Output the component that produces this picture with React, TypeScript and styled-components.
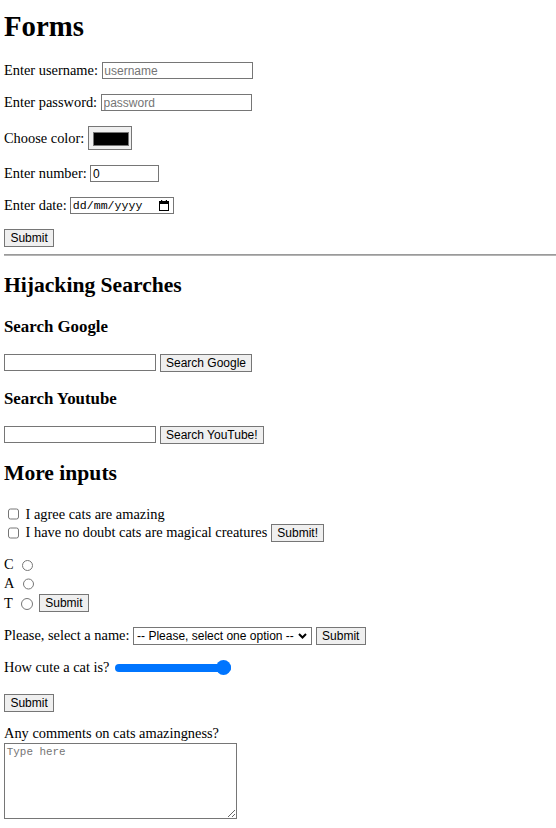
import styled, { createGlobalStyle } from 'styled-components'

const GlobalStyle = createGlobalStyle`
  html, body {
    margin: 0;
    background: #fff;
  }
  body {
    font-family: "Liberation Serif", "Times New Roman", serif;
    font-size: 14.4px;
    color: #000;
  }
`

const Page = styled.main`
  display: flex;
  flex-direction: column;
  padding: 0 0 0 4px;
`

const Form = styled.form`
  display: flex;
  flex-direction: column;
`

const Title = styled.h1<{ $mt: number }>`
  margin: ${p => p.$mt}px 0 0;
  font-size: 28.8px;
  line-height: 33px;
  font-weight: bold;
`

const Section = styled.h2<{ $mt: number }>`
  margin: ${p => p.$mt}px 0 0;
  font-size: 21.6px;
  line-height: 25px;
  font-weight: bold;
`

const Sub = styled.h3<{ $mt: number }>`
  margin: ${p => p.$mt}px 0 0;
  font-size: 16.85px;
  line-height: 19px;
  font-weight: bold;
`

const Row = styled.div<{ $mt: number; $h?: number }>`
  display: flex;
  align-items: center;
  gap: 3.6px;
  height: ${p => p.$h ?? 20}px;
  margin-top: ${p => p.$mt}px;
  white-space: nowrap;
`

const Rule = styled.hr`
  margin: 6px 0 0;
  height: 0;
  border: none;
  border-top: 1px solid #9a9a9a;
  border-bottom: 1px solid #b4b4b4;
`

const TextInput = styled.input<{ $w: number }>`
  box-sizing: border-box;
  width: ${p => p.$w}px;
  height: 17px;
  margin: 0;
  padding: 0 1.8px;
  border: 1px solid #767676;
  border-radius: 0;
  background: #fff;
  color: #000;
  font: 12px "Liberation Sans", Arial, sans-serif;

  &::placeholder {
    color: #757575;
  }
  &::-webkit-inner-spin-button,
  &::-webkit-outer-spin-button {
    -webkit-appearance: none;
    margin: 0;
  }
`

const Button = styled.button`
  box-sizing: border-box;
  height: 18px;
  margin: 0;
  padding: 0 5.4px;
  border: 1px solid #767676;
  border-radius: 0;
  background: #efefef;
  color: #000;
  font: 12px "Liberation Sans", Arial, sans-serif;
  line-height: 14px;
`

const ColorPick = styled.input`
  box-sizing: border-box;
  width: 44.5px;
  height: 24px;
  margin: 0;
  padding: 0;
  border: 1px solid #767676;
  border-radius: 0;
  background: #efefef;

  &::-webkit-color-swatch-wrapper {
    padding: 5px 2px 3px 4px;
  }
  &::-webkit-color-swatch {
    border: 1px solid #777;
  }
`

const DateField = styled.div`
  box-sizing: border-box;
  display: flex;
  align-items: center;
  width: 103.5px;
  height: 17px;
  padding: 0 3.5px 0 1.5px;
  border: 1px solid #767676;
  background: #fff;

  input {
    flex: 1;
    min-width: 0;
    margin: 0;
    padding: 0;
    border: none;
    outline: none;
    background: transparent;
    font: 11.6px "Liberation Mono", "DejaVu Sans Mono", monospace;
    color: #000;
  }
  input::placeholder {
    color: #000;
  }
`

const Check = styled.input`
  width: 11.7px;
  height: 11.7px;
  margin: 2.7px 2.7px 2.7px 3.6px;
`

const Radio = styled.input`
  width: 11.7px;
  height: 11.7px;
  margin: 1px 2.7px 0 4.5px;
`

const SelectWrap = styled.div`
  position: relative;
  display: flex;

  svg {
    position: absolute;
    top: 6px;
    right: 5px;
    pointer-events: none;
  }
`

const Select = styled.select`
  box-sizing: border-box;
  width: 179px;
  height: 18px;
  margin: 0;
  padding: 0 0 0 3px;
  border: 1px solid #767676;
  border-radius: 0;
  background: #fff;
  color: #000;
  font: 12px "Liberation Sans", Arial, sans-serif;
  -webkit-appearance: none;
  appearance: none;
`

const Range = styled.input`
  -webkit-appearance: none;
  appearance: none;
  width: 116px;
  height: 16px;
  margin: 0 0 0 2px;
  background: transparent;

  &::-webkit-slider-runnable-track {
    height: 8px;
    border-radius: 4px;
    background: #0075ff;
  }
  &::-webkit-slider-thumb {
    -webkit-appearance: none;
    width: 15px;
    height: 15px;
    margin-top: -3.5px;
    border: none;
    border-radius: 50%;
    background: #0075ff;
  }
`

const Caption = styled.label<{ $mt: number }>`
  display: block;
  margin-top: ${p => p.$mt}px;
  line-height: 16.5px;
`

const Comments = styled.textarea`
  box-sizing: border-box;
  width: 233px;
  height: 76px;
  margin: 1.5px 0 0;
  padding: 1.8px;
  border: 1px solid #767676;
  border-radius: 0;
  font: 10.9px "Liberation Mono", "DejaVu Sans Mono", monospace;
  resize: both;

  &::placeholder {
    color: #757575;
  }
`

const CalendarIcon = () => (
  <svg width="10" height="11" viewBox="0 0 10 11">
    <rect x="0.5" y="1.5" width="9" height="9" fill="none" stroke="#000" />
    <rect x="0.5" y="1.5" width="9" height="2.5" fill="#000" />
    <rect x="2" y="0" width="1.2" height="2" fill="#000" />
    <rect x="6.8" y="0" width="1.2" height="2" fill="#000" />
  </svg>
)

const Chevron = () => (
  <svg width="9" height="6" viewBox="0 0 9 6">
    <path d="M1 1 L4.5 4.5 L8 1" fill="none" stroke="#000" strokeWidth="2" />
  </svg>
)

const App = () => {
  return (
    <Page>
      <GlobalStyle />
      <Title $mt={10}>Forms</Title>
      <Form onSubmit={e => e.preventDefault()}>
        <Row $mt={17.5}>
          <label htmlFor="username">Enter username:</label>
          <TextInput id="username" $w={151} type="text" placeholder="username" />
        </Row>
        <Row $mt={12}>
          <label htmlFor="password">Enter password:</label>
          <TextInput id="password" $w={151} type="password" placeholder="password" />
        </Row>
        <Row $mt={12.5} $h={26}>
          <label htmlFor="color">Choose color:</label>
          <ColorPick id="color" type="color" defaultValue="#000000" />
        </Row>
        <Row $mt={12.5}>
          <label htmlFor="number">Enter number:</label>
          <TextInput id="number" $w={68.5} type="number" defaultValue={0} />
        </Row>
        <Row $mt={12}>
          <label htmlFor="date">Enter date:</label>
          <DateField>
            <input id="date" type="text" placeholder="dd/mm/yyyy" />
            <CalendarIcon />
          </DateField>
        </Row>
        <Row $mt={12.5}>
          <Button type="submit">Submit</Button>
        </Row>
      </Form>
      <Rule />

      <Section $mt={17.2}>Hijacking Searches</Section>
      <Sub $mt={18.6}>Search Google</Sub>
      <Form action="https://www.google.com/search" onSubmit={e => e.preventDefault()}>
        <Row $mt={18.2} $h={18}>
          <TextInput $w={152} type="text" name="q" />
          <Button type="submit">Search Google</Button>
        </Row>
      </Form>
      <Sub $mt={16.8}>Search Youtube</Sub>
      <Form action="https://www.youtube.com/results" onSubmit={e => e.preventDefault()}>
        <Row $mt={18.2} $h={18}>
          <TextInput $w={152} type="text" name="search_query" />
          <Button type="submit">Search YouTube!</Button>
        </Row>
      </Form>

      <Section $mt={17.2}>More inputs</Section>
      <Form onSubmit={e => e.preventDefault()}>
        <Row $mt={19.8} $h={16.5}>
          <Check id="agree" type="checkbox" />
          <label htmlFor="agree">I agree cats are amazing</label>
        </Row>
        <Row $mt={1.3} $h={18}>
          <Check id="magic" type="checkbox" />
          <label htmlFor="magic">I have no doubt cats are magical creatures</label>
          <Button type="submit">Submit!</Button>
        </Row>
      </Form>
      <Form onSubmit={e => e.preventDefault()}>
        <Row $mt={14.2} $h={18}>
          <label htmlFor="c">C</label>
          <Radio id="c" type="radio" name="cat" />
        </Row>
        <Row $mt={0.5} $h={18}>
          <label htmlFor="a">A</label>
          <Radio id="a" type="radio" name="cat" />
        </Row>
        <Row $mt={2} $h={18}>
          <label htmlFor="t">T</label>
          <Radio id="t" type="radio" name="cat" />
          <Button type="submit">Submit</Button>
        </Row>
      </Form>
      <Form onSubmit={e => e.preventDefault()}>
        <Row $mt={14.5} $h={18}>
          <label htmlFor="name">Please, select a name:</label>
          <SelectWrap>
            <Select id="name" defaultValue="">
              <option value="">-- Please, select one option --</option>
              <option value="tom">Tom</option>
              <option value="felix">Felix</option>
              <option value="garfield">Garfield</option>
            </Select>
            <Chevron />
          </SelectWrap>
          <Button type="submit">Submit</Button>
        </Row>
      </Form>
      <Form onSubmit={e => e.preventDefault()}>
        <Row $mt={14} $h={18}>
          <label htmlFor="cute">How cute a cat is?</label>
          <Range id="cute" type="range" min={0} max={10} defaultValue={10} />
        </Row>
        <Row $mt={17} $h={18}>
          <Button type="submit">Submit</Button>
        </Row>
        <Caption htmlFor="comments" $mt={13.2}>Any comments on cats amazingness?</Caption>
        <div>
          <Comments id="comments" placeholder="Type here" />
        </div>
      </Form>
    </Page>
  )
}

export default App
